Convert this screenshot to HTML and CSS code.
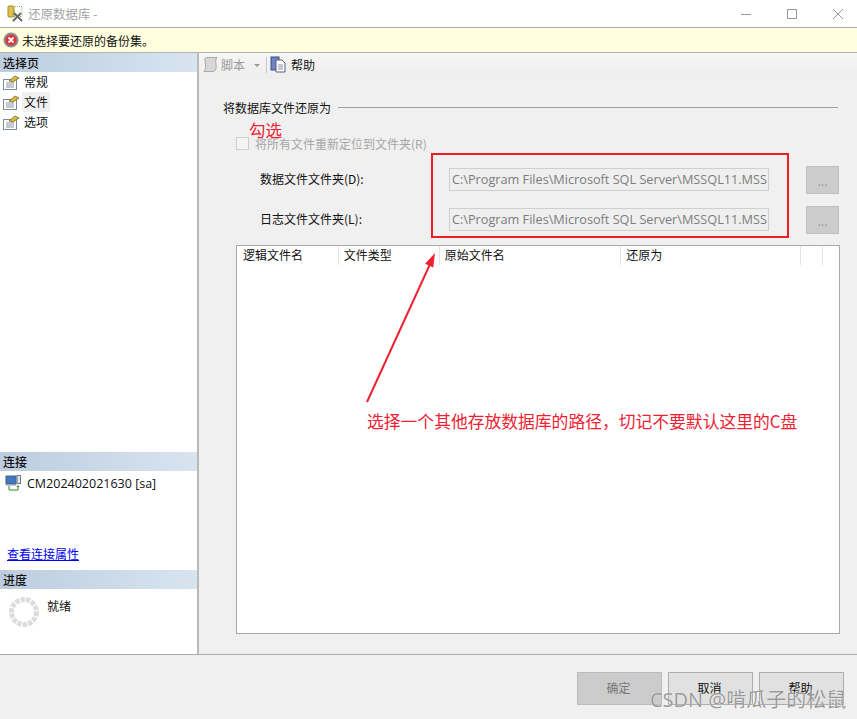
FILE: index.html
```html
<!DOCTYPE html>
<html lang="zh-CN">
<head>
  <meta charset="UTF-8" />
  <title>还原数据库</title>
  <link rel="stylesheet" href="styles.css">
</head>
<body>
<div class="window">

  <header class="titlebar">
    <svg class="app-icon" width="16" height="18" viewBox="0 0 16 18">
      <rect x="1" y="1" width="6" height="11" rx="1" fill="#e3c04d" stroke="#a98a26"/>
      <rect x="6" y="1.500" width="9" height="10" fill="none" stroke="#6cbb4c" stroke-dasharray="1 1"/>
      <path d="M6 16 L14 8 M7 8 L15 16" stroke="#666" stroke-width="2"/>
    </svg>
    <span class="title-text">还原数据库 -</span>
    <div class="win-btns">
      <svg width="12" height="12" viewBox="0 0 12 12"><path d="M1 6.500H11" stroke="#999"/></svg>
      <svg width="12" height="12" viewBox="0 0 12 12"><rect x="1.500" y="1.500" width="9" height="9" fill="none" stroke="#999"/></svg>
      <svg width="12" height="12" viewBox="0 0 12 12"><path d="M1 1L11 11M11 1L1 11" stroke="#999"/></svg>
    </div>
  </header>

  <div class="msgbar">
    <svg width="16" height="16" viewBox="0 0 16 16">
      <circle cx="8" cy="8" r="7.500" fill="#8d8d8d"/>
      <circle cx="8" cy="8" r="5.500" fill="#d9353c"/>
      <path d="M5.500 5.500L10.500 10.500M10.500 5.500L5.500 10.500" stroke="#fff" stroke-width="1.800"/>
    </svg>
    <span>未选择要还原的备份集。</span>
  </div>

  <div class="body-row">
    <aside class="sidebar">
      <div class="side-head">选择页</div>
      <ul class="pages">
        <li><svg class="page-icon" viewBox="0 0 17 15"><use href="#pg"/></svg><span>常规</span></li>
        <li><svg class="page-icon" viewBox="0 0 17 15"><use href="#pg"/></svg><span class="current">文件</span></li>
        <li><svg class="page-icon" viewBox="0 0 17 15"><use href="#pg"/></svg><span>选项</span></li>
      </ul>

      <div class="side-head">连接</div>
      <div class="conn">
        <svg width="16" height="16" viewBox="0 0 16 16">
          <rect x="1" y="1" width="10" height="8" fill="#3c78c8" stroke="#50606f"/>
          <rect x="12" y="0.500" width="3.500" height="8" fill="#dde4ee" stroke="#6a7c90"/>
          <rect x="1" y="9" width="10" height="1.500" fill="#8aa0b8"/>
          <path d="M4 11V15H13V11" fill="none" stroke="#2f8a22"/>
          <path d="M11.500 12L13 10L14.500 12Z" fill="#2f8a22"/>
        </svg>
        <span>CM202402021630 [sa]</span>
      </div>
      <a class="conn-link" href="#">查看连接属性</a>

      <div class="side-head">进度</div>
      <div class="progress">
        <svg width="30" height="30" viewBox="0 0 30 30">
          <circle cx="15" cy="15" r="12.500" fill="none" stroke="#dcdcdc" stroke-width="5" stroke-dasharray="4.300 1.200"/>
        </svg>
        <span>就绪</span>
      </div>
    </aside>

    <main class="content">
      <div class="toolbar">
        <svg class="tool-icon" width="17" height="17" viewBox="0 0 17 17">
          <path d="M4 1.500H15C13.500 3 13.500 5 14 8C14.500 11 14 14 12 15.500H2C3.500 14 4 11 3.500 8C3 5 2 3 4 1.500Z" fill="#d8d8d8" stroke="#a9a9a9"/>
        </svg>
        <span class="tool-off">脚本</span>
        <span class="caret"></span>
        <span class="tool-sep"></span>
        <svg class="tool-icon" width="16" height="17" viewBox="0 0 16 17">
          <rect x="1" y="1" width="8" height="13" fill="#6f83c4" stroke="#3d4c86"/>
          <path d="M6 4H12L15 7V16H6Z" fill="#fff" stroke="#55617f"/>
          <path d="M8 9H13M8 11H13M8 13H13" stroke="#8790a8"/>
        </svg>
        <span>帮助</span>
      </div>

      <div class="form">
        <div class="group-title"><span>将数据库文件还原为</span><i></i></div>

        <label class="check-row">
          <span class="checkbox"></span>
          <span>将所有文件重新定位到文件夹(R)</span>
        </label>

        <div class="folder-row">
          <span class="folder-label">数据文件文件夹(D):</span>
          <span class="path">C:\Program Files\Microsoft SQL Server\MSSQL11.MSS</span>
          <span class="browse">...</span>
        </div>
        <div class="folder-row">
          <span class="folder-label">日志文件文件夹(L):</span>
          <span class="path">C:\Program Files\Microsoft SQL Server\MSSQL11.MSS</span>
          <span class="browse">...</span>
        </div>

        <div class="grid">
          <div class="grid-head">
            <span class="col-logical">逻辑文件名</span>
            <span class="col-type">文件类型</span>
            <span class="col-source">原始文件名</span>
            <span class="col-target">还原为</span>
            <span class="col-blank"></span>
            <span class="col-last"></span>
          </div>
        </div>
      </div>
    </main>
  </div>

  <footer class="footer">
    <span class="btn btn-off">确定</span>
    <span class="btn">取消</span>
    <span class="btn">帮助</span>
  </footer>

  <!-- annotations drawn over the screenshot -->
  <span class="note note-check">勾选</span>
  <div class="note-box"></div>
  <svg class="note-arrow" width="80" height="170" viewBox="0 0 80 170">
    <path d="M3 164L67 24" stroke="#ee2233" stroke-width="2" fill="none"/>
    <path d="M71 15L69.300 29.600L61.100 25.800Z" fill="#ee2233"/>
  </svg>
  <span class="note note-path">选择一个其他存放数据库的路径，切记不要默认这里的C盘</span>
  <span class="watermark">CSDN @啃瓜子的松鼠</span>

  <svg width="0" height="0" class="defs">
    <defs>
      <g id="pg">
        <rect x="0.500" y="4.500" width="13" height="10" fill="#fff" stroke="#7d8a99"/>
        <path d="M3 8H11M3 10H11M3 12H11" stroke="#8a97a8"/>
        <path d="M6 6L12 1L16 3L10 7Z" fill="#d9b93f" stroke="#6d5a16" stroke-width="0.700"/>
      </g>
    </defs>
  </svg>
</div>
</body>
</html>
```

FILE: styles.css
```css
* { box-sizing: border-box; }
html, body {
  margin: 0;
  padding: 0;
}
body {
  font-family: "Noto Sans CJK SC", "Open Sans", sans-serif;
  font-size: 12px;
  color: #111;
  background: #f0f0f0;
}
.window {
  position: relative;
  width: 857px;
  height: 719px;
  overflow: hidden;
  display: flex;
  flex-direction: column;
}
.defs { position: absolute; }

/* title bar */
.titlebar {
  height: 28px;
  flex: none;
  display: flex;
  align-items: center;
  padding-left: 7px;
  background: #fff;
  border-bottom: 1px solid #a9a9a9;
}
.title-text {
  margin-left: 5px;
  color: #a3a3a3;
  font-size: 12.500px;
}
.win-btns {
  margin-left: auto;
  display: flex;
  gap: 34px;
  padding-right: 13px;
}

.msgbar {
  height: 25px;
  flex: none;
  display: flex;
  align-items: center;
  gap: 3px;
  padding-left: 3px;
  background: #ffffdf;
  border-bottom: 1px solid #b4b4b4;
}

.body-row {
  flex: 1;
  display: flex;
  min-height: 0;
}

/* left panel */
.sidebar {
  width: 199px;
  flex: none;
  background: #fff;
  border-right: 2px solid #b9b9b9;
  display: flex;
  flex-direction: column;
}
.side-head {
  height: 19px;
  flex: none;
  padding-left: 3px;
  line-height: 19px;
  font-weight: 500;
  background: linear-gradient(to right, #bccddf, #d8e4f0);
}
.pages {
  list-style: none;
  margin: 0;
  padding: 0 0 0 3px;
  height: 380px;
  flex: none;
}
.pages li {
  height: 20px;
  display: flex;
  align-items: center;
  gap: 2px;
}
.page-icon {
  width: 17px;
  height: 15px;
}
.pages span { padding: 0 2px; line-height: 20px; }
.pages .current { background: #f0f0f0; }
.conn {
  height: 72px;
  flex: none;
  display: flex;
  align-items: flex-start;
  gap: 6px;
  padding: 4px 0 0 5px;
  font-family: "Open Sans", "Noto Sans CJK SC", sans-serif;
  font-size: 12.500px;
}
.conn-link {
  height: 27px;
  flex: none;
  padding: 2px 0 0 7px;
  color: #0000ee;
  text-decoration: underline;
}
.progress {
  display: flex;
  gap: 8px;
  padding: 8px 0 0 9px;
}

/* right panel */
.content {
  flex: 1;
  min-width: 0;
}
.toolbar {
  height: 26px;
  display: flex;
  align-items: center;
  padding: 0 0 3px 3px;
  background: linear-gradient(to bottom, #f6f6f6, #ededed);
}
.tool-icon { margin-right: 2px; }
.tool-off { color: #9a9a9a; }
.caret {
  margin: 2px 6px 0 9px;
  border: 3px solid transparent;
  border-top-color: #999;
  border-bottom: 0;
}
.tool-sep {
  width: 1px;
  height: 16px;
  margin-right: 3px;
  background: #c8c8c8;
}
.tool-sep + .tool-icon { margin-right: 5px; }
.form { padding: 20px 17px 0 37px; }
.group-title {
  display: flex;
  align-items: center;
  gap: 7px;
  margin: 0 2px 0 -13px;
  height: 17px;
}
.group-title i {
  flex: 1;
  height: 1px;
  background: #a0a0a0;
}
.check-row {
  display: flex;
  align-items: center;
  gap: 6px;
  height: 20px;
  margin-top: 17px;
  color: #a6a6a6;
}
.checkbox {
  width: 13px;
  height: 13px;
  border: 1px solid #cfcfcf;
  background: #f4f4f4;
}
.folder-row {
  display: flex;
  align-items: center;
  height: 28px;
  margin-bottom: 12px;
}
.check-row + .folder-row { margin-top: 13px; }
.folder-label {
  width: 213px;
  padding-left: 24px;
  margin-top: -4px;
}
.path {
  width: 320px;
  height: 23px;
  margin-top: -2px;
  line-height: 21px;
  padding-left: 2px;
  white-space: nowrap;
  overflow: hidden;
  font-family: "Open Sans", sans-serif;
  font-size: 12.700px;
  color: #7c7c7c;
  background: #efefef;
  border: 1px solid #cfcfcf;
}
.browse {
  width: 33px;
  height: 28px;
  margin-left: 37px;
  line-height: 28px;
  text-align: center;
  color: #999;
  background: #cccccc;
  border: 1px solid #c0c0c0;
}
.grid {
  height: 389px;
  margin-top: -1px;
  background: #fff;
  border: 1px solid #a9a9a9;
}
.grid-head {
  display: flex;
  height: 19px;
}
.grid-head span {
  line-height: 18px;
  padding-left: 5px;
  border-right: 1px solid #e4e4e4;
}
.grid-head .col-logical { width: 102px; padding-left: 6px; }
.grid-head .col-type { width: 101px; }
.grid-head .col-source { width: 182px; }
.grid-head .col-target { width: 180px; }
.grid-head .col-blank { width: 22px; }
.grid-head .col-last { width: 16px; border-right: 0; }

/* bottom buttons */
.footer {
  height: 65px;
  flex: none;
  display: flex;
  justify-content: flex-end;
  gap: 6px;
  padding: 17px 13px 0 0;
  background: #f0f0f0;
  border-top: 1px solid #ababb5;
}
.btn {
  width: 85px;
  height: 33px;
  line-height: 29px;
  padding-right: 2px;
  text-align: center;
  background: #e1e1e1;
  border: 1px solid #adadad;
}
.btn-off {
  color: #777;
  background: #cccccc;
  border-color: #bcbcbc;
}

/* annotations */
.note {
  position: absolute;
  color: #ee2233;
  white-space: nowrap;
}
.note-check {
  left: 249px;
  top: 122px;
  font-size: 16.500px;
  line-height: 16px;
}
.note-box {
  position: absolute;
  left: 431px;
  top: 153px;
  width: 358px;
  height: 85px;
  border: 2px solid #ee1c25;
}
.note-arrow {
  position: absolute;
  left: 364px;
  top: 238px;
}
.note-path {
  left: 367px;
  top: 411px;
  font-size: 16.800px;
  line-height: 20px;
}
.watermark {
  position: absolute;
  left: 650px;
  top: 690px;
  font-family: "Open Sans", "Noto Sans CJK SC", sans-serif;
  font-size: 20px;
  line-height: 20px;
  white-space: nowrap;
  color: rgba(120, 120, 120, 0.75);
  text-shadow: 0 0 1px #fff;
}
```
